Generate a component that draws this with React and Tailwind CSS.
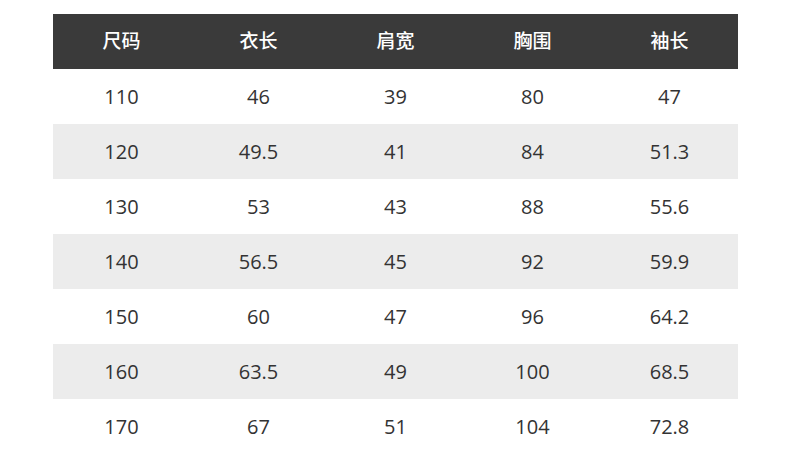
const headers = ["尺码", "衣长", "肩宽", "胸围", "袖长"];

const rows = [
  ["110", "46", "39", "80", "47"],
  ["120", "49.5", "41", "84", "51.3"],
  ["130", "53", "43", "88", "55.6"],
  ["140", "56.5", "45", "92", "59.9"],
  ["150", "60", "47", "96", "64.2"],
  ["160", "63.5", "49", "100", "68.5"],
  ["170", "67", "51", "104", "72.8"],
];

export default function App() {
  return (
    <div
      className="w-[790px] h-[466px] bg-white pt-[14px] pl-[53px]"
      style={{ fontFamily: '"Open Sans", "Noto Sans CJK SC", sans-serif' }}
    >
      <div className="w-[685px]">
        <div className="grid grid-cols-5 h-[55px] bg-[#3a3a3a] text-white text-[19px] font-medium">
          {headers.map((h) => (
            <div key={h} className="flex items-center justify-center">
              {h}
            </div>
          ))}
        </div>
        {rows.map((row, i) => (
          <div
            key={row[0]}
            className={`grid grid-cols-5 h-[55px] text-[20px] text-[#333333] ${
              i % 2 === 1 ? "bg-[#ececec]" : "bg-white"
            }`}
          >
            {row.map((cell, j) => (
              <div key={j} className="flex items-center justify-center">
                {cell}
              </div>
            ))}
          </div>
        ))}
      </div>
    </div>
  );
}
